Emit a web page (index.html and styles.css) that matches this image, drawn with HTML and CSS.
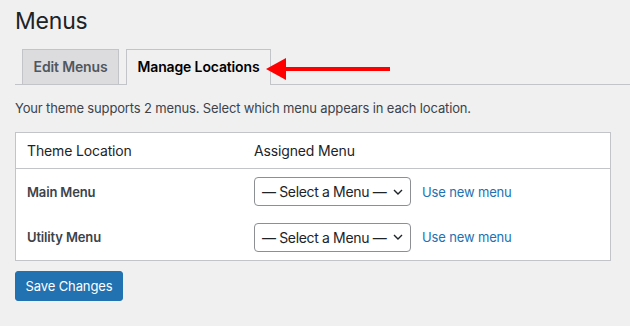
FILE: index.html
```html
<!DOCTYPE html>
<html>
<head>
<meta charset="utf-8">
<link rel="stylesheet" href="styles.css">
</head>
<body>
<div class="wrap">
  <h1 class="title">Menus</h1>
  <nav class="tabs">
    <a class="tab">Edit Menus</a>
    <a class="tab active">Manage Locations</a>
    <svg class="arrow" width="130" height="26" viewBox="0 0 130 26">
      <polygon points="0,11 20,0 20,22" fill="#f00"/>
      <rect x="19" y="9" width="105" height="4" fill="#f00"/>
    </svg>
  </nav>
  <p class="desc">Your theme supports 2 menus. Select which menu appears in each location.</p>
  <table class="locations">
    <thead>
      <tr><th class="col-loc">Theme Location</th><th>Assigned Menu</th></tr>
    </thead>
    <tbody>
      <tr>
        <td class="loc">Main Menu</td>
        <td><div class="assign"><span class="select"><span class="sel-text">— Select a Menu —</span><svg class="chev" width="10" height="6" viewBox="0 0 10 6"><path d="M1 1 L5 5 L9 1" fill="none" stroke="#1d2327" stroke-width="1.4"/></svg></span><a class="link">Use new menu</a></div></td>
      </tr>
      <tr>
        <td class="loc">Utility Menu</td>
        <td><div class="assign"><span class="select"><span class="sel-text">— Select a Menu —</span><svg class="chev" width="10" height="6" viewBox="0 0 10 6"><path d="M1 1 L5 5 L9 1" fill="none" stroke="#1d2327" stroke-width="1.4"/></svg></span><a class="link">Use new menu</a></div></td>
      </tr>
    </tbody>
  </table>
  <button class="btn-primary">Save Changes</button>
</div>
</body>
</html>
```
FILE: styles.css
```css
html, body {
  margin: 0;
  padding: 0;
  background: #f0f0f1;
  font-family: Inter, "Liberation Sans", sans-serif;
  color: #3c434a;
  letter-spacing: -0.15px;
}
.wrap {
  padding: 6px 20px 0 15px;
}
.title {
  margin: 0;
  font-size: 23px;
  font-weight: 400;
  line-height: 30px;
  color: #1d2327;
  letter-spacing: -0.2px;
}
.tabs {
  position: relative;
  display: flex;
  margin-top: 13px;
  padding-left: 7px;
  border-bottom: 1px solid #c3c4c7;
  margin-right: -20px;
}
.tab {
  display: block;
  box-sizing: border-box;
  height: 35px;
  margin-bottom: -1px;
  padding: 0 10px;
  line-height: 34px;
  font-size: 14px;
  font-weight: 600;
  color: #50575e;
  background: #dcdcde;
  border: 1px solid #c3c4c7;
  border-bottom: none;
  margin-right: 7px;
  white-space: nowrap;
}
.tab:first-child {
  width: 97px;
  text-align: center;
  padding: 0;
}
.tab.active {
  color: #000;
  background: #f0f0f1;
  height: 36px;
  width: 145px;
  text-align: center;
  padding: 0;
}
.arrow {
  position: absolute;
  left: 251px;
  top: 9px;
}
.desc {
  margin: 14px 0 0;
  font-size: 13px;
  line-height: 18px;
  color: #3c434a;
}
.locations {
  margin-top: 15px;
  width: 596px;
  border-collapse: collapse;
  background: #fff;
  border: 1px solid #c3c4c7;
}
.locations th {
  text-align: left;
  font-weight: 400;
  font-size: 14px;
  color: #1d2327;
  height: 35px;
  padding: 0 10px 0 11px;
  border-bottom: 1px solid #c3c4c7;
}
.locations th.col-loc {
  width: 206px;
}
.locations td {
  padding: 0 10px 0 11px;
  height: 46px;
}
.locations tbody tr:first-child td {
  height: 45px;
}
.locations td.loc {
  font-size: 13px;
  font-weight: 600;
  color: #3c434a;
}
.assign {
  display: flex;
  align-items: center;
  gap: 11px;
}
.select {
  box-sizing: border-box;
  display: flex;
  align-items: center;
  justify-content: space-between;
  width: 157px;
  height: 29px;
  padding: 0 7px 0 7px;
  border: 1px solid #8c8f94;
  border-radius: 4px;
  background: #fff;
  font-size: 14px;
  color: #1d2327;
  white-space: nowrap;
}
.sel-text {
  letter-spacing: -0.35px;
}
.link {
  color: #2271b1;
  font-size: 13px;
}
.btn-primary {
  display: block;
  margin-top: 10px;
  width: 108px;
  height: 30px;
  padding: 0;
  border: 1px solid #2271b1;
  border-radius: 3px;
  background: #2271b1;
  color: #fff;
  font-family: inherit;
  font-size: 13px;
  letter-spacing: -0.1px;
}
```
